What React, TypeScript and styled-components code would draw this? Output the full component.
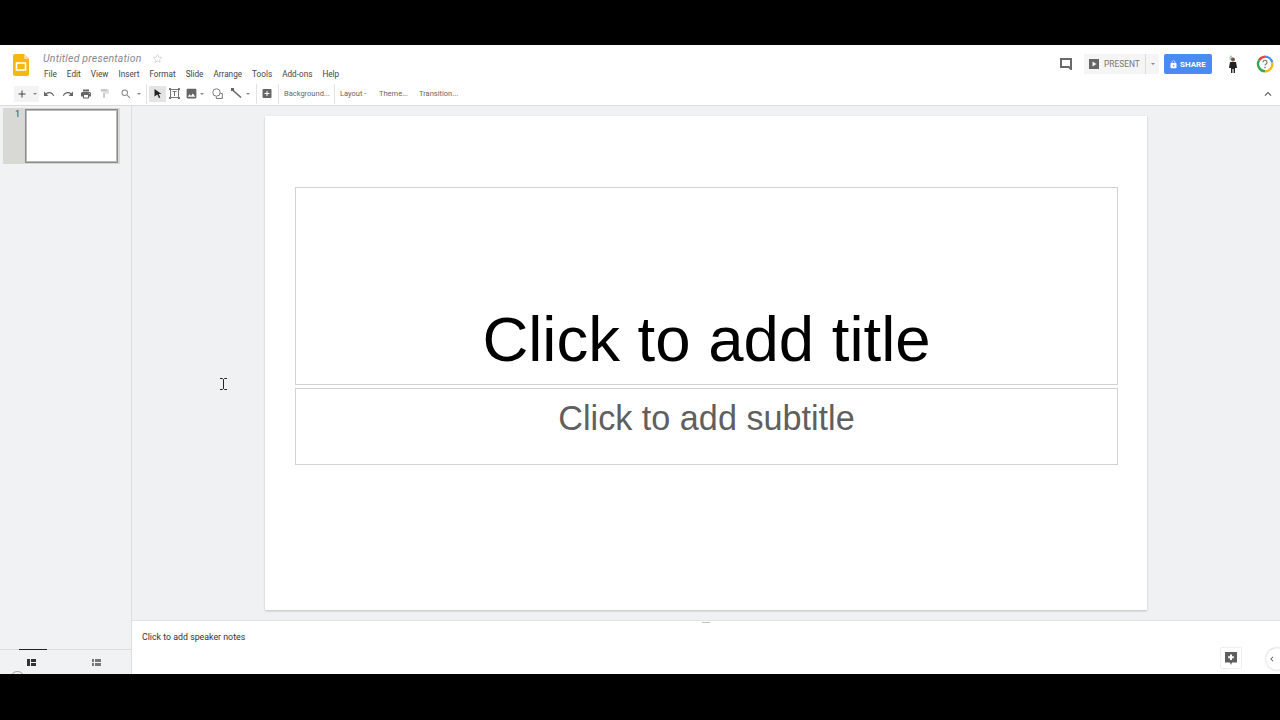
import React from 'react';
import styled, { createGlobalStyle } from 'styled-components';
import {
  MdUndo,
  MdRedo,
  MdPrint,
  MdFormatPaint,
  MdSearch,
  MdImage,
  MdAddBox,
  MdLock,
  MdKeyboardArrowUp,
  MdKeyboardArrowLeft,
  MdAdd,
} from 'react-icons/md';

const GlobalStyle = createGlobalStyle`
  html, body {
    margin: 0;
    padding: 0;
    background: #000;
    overflow: hidden;
  }
  body {
    font-family: Roboto, "Liberation Sans", sans-serif;
  }
`;

const Page = styled.div`
  position: relative;
  width: 1280px;
  height: 720px;
  background: #000;
  padding: 45px 0 46px;
  box-sizing: border-box;
`;

const Editor = styled.div`
  width: 100%;
  height: 100%;
  background: #fff;
  display: flex;
  flex-direction: column;
  overflow: hidden;
`;

const Header = styled.header`
  height: 39px;
  flex: none;
  display: flex;
  align-items: flex-start;
  padding: 9px 0 0 13px;
  box-sizing: border-box;
`;

const TitleBlock = styled.div`
  margin-left: 14px;
  display: flex;
  flex-direction: column;
`;

const TitleRow = styled.div`
  display: flex;
  align-items: center;
  height: 10px;
  margin-top: -1px;
`;

const DocTitle = styled.span`
  font-size: 10.5px;
  font-style: italic;
  color: #8a8a8a;
  letter-spacing: 0.2px;
  width: 109px;
`;

const MenuBar = styled.nav`
  display: flex;
  gap: 10px;
  margin: 6px 0 0 1px;
`;

const MenuItem = styled.span`
  font-size: 8.2px;
  line-height: 11px;
  color: #444;
`;

const HeaderRight = styled.div`
  margin-left: auto;
  display: flex;
  align-items: center;
  height: 20px;
  padding-right: 6px;
`;

const PresentGroup = styled.div`
  display: flex;
  height: 20px;
  width: 75px;
  margin-left: 12px;
  background: #f5f5f5;
`;

const PresentButton = styled.div`
  flex: 1;
  display: flex;
  align-items: center;
  gap: 5px;
  padding-left: 5px;
  font-size: 8.4px;
  color: #777;
  border-right: 1px solid #ddd;
`;

const PresentCaret = styled.div`
  width: 13px;
  display: flex;
  align-items: center;
  justify-content: center;
`;

const Caret = styled.span`
  width: 0;
  height: 0;
  border-left: 2px solid transparent;
  border-right: 2px solid transparent;
  border-top: 2px solid #888;
`;

const ShareButton = styled.div`
  width: 48px;
  height: 20px;
  margin-left: 5px;
  border-radius: 2px;
  background: #4a8af4;
  color: #fff;
  display: flex;
  align-items: center;
  padding-left: 5px;
  box-sizing: border-box;
  gap: 2px;
  font-size: 8px;
  font-weight: 700;
`;

const AvatarSlot = styled.div`
  margin-left: 14px;
  width: 14px;
  display: flex;
`;

const HelpSlot = styled.div`
  margin-left: 16px;
  display: flex;
`;

const Toolbar = styled.div`
  height: 22px;
  flex: none;
  display: flex;
  align-items: center;
  padding: 0 5px 2px 14px;
  box-sizing: border-box;
  border-bottom: 1px solid #dcdcdc;
`;

const ToolButton = styled.div<{ $w: number; $ml?: number; $bg?: string }>`
  width: ${(p) => p.$w}px;
  height: 16px;
  flex: none;
  margin-left: ${(p) => p.$ml ?? 0}px;
  background: ${(p) => p.$bg ?? 'transparent'};
  display: flex;
  align-items: center;
  justify-content: center;
  color: ${(p) => (p.$bg === '#e4e4e4' ? '#222' : '#666')};
`;

const ToolDivider = styled.span<{ $ml: number }>`
  width: 1px;
  height: 20px;
  margin-left: ${(p) => p.$ml}px;
  background: #e3e3e3;
  flex: none;
`;

const ToolText = styled.span<{ $ml: number; $w: number }>`
  margin-left: ${(p) => p.$ml}px;
  width: ${(p) => p.$w}px;
  flex: none;
  font-size: 7.5px;
  color: #666;
  white-space: nowrap;
`;

const CollapseSlot = styled.div`
  margin-left: auto;
  display: flex;
  color: #555;
`;

const Workspace = styled.div`
  flex: 1;
  min-height: 0;
  display: flex;
`;

const Filmstrip = styled.aside`
  width: 132px;
  flex: none;
  box-sizing: border-box;
  background: #f1f2f4;
  border-right: 1px solid #dedede;
  display: flex;
  flex-direction: column;
  padding-top: 2px;
`;

const SlideEntry = styled.div`
  width: 117px;
  height: 56px;
  margin-left: 3px;
  background: #d8d8d4;
  display: flex;
  box-sizing: border-box;
  padding: 1px 2px 1px 0;
`;

const SlideNumber = styled.span`
  width: 22px;
  padding-right: 5px;
  box-sizing: border-box;
  text-align: right;
  font-size: 9px;
  line-height: 10px;
  color: #444;
`;

const Thumb = styled.div`
  flex: 1;
  background: #fff;
  border: 1px solid #8a8a8a;
  box-shadow: inset 0 0 0 1px #bbb;
`;

const ViewTabs = styled.div`
  margin-top: auto;
  height: 24px;
  flex: none;
  display: flex;
  border-top: 1px solid #dcdcdc;
  position: relative;
  &::after {
    content: '';
    position: absolute;
    left: 10px;
    top: 21px;
    width: 13px;
    height: 13px;
    border: 1px solid #8fa3b5;
    border-radius: 50%;
  }
`;

const ViewTab = styled.div<{ $active?: boolean }>`
  width: 66px;
  padding-right: 3px;
  box-sizing: border-box;
  display: flex;
  align-items: center;
  justify-content: center;
  color: ${(p) => (p.$active ? '#333' : '#777')};
  position: relative;
  &::before {
    content: '';
    display: ${(p) => (p.$active ? 'block' : 'none')};
    position: absolute;
    top: -1px;
    left: 19px;
    width: 28px;
    height: 1px;
    background: #222;
  }
`;

const MainColumn = styled.main`
  flex: 1;
  min-width: 0;
  display: flex;
  flex-direction: column;
`;

const Canvas = styled.div`
  flex: 1;
  min-height: 0;
  background: #f0f1f3;
  padding: 10px 0 0 133px;
  box-sizing: border-box;
`;

const Slide = styled.section`
  width: 882px;
  height: 494px;
  background: #fff;
  box-shadow: 0 1px 2px rgba(0, 0, 0, 0.22);
  padding: 71px 29px 0 30px;
  box-sizing: border-box;
  display: flex;
  flex-direction: column;
  gap: 3px;
  font-family: "Liberation Sans", Arial, sans-serif;
`;

const Placeholder = styled.div<{ $h: number }>`
  height: ${(p) => p.$h}px;
  flex: none;
  border: 1px solid #d2d2d2;
  box-sizing: border-box;
  display: flex;
  justify-content: center;
`;

const TitleText = styled.div`
  align-self: flex-end;
  font-size: 63.5px;
  line-height: 74px;
  color: #000;
  padding-bottom: 8px;
`;

const SubtitleText = styled.div`
  font-size: 34.2px;
  line-height: 40px;
  color: #5f5f5f;
  padding-top: 9px;
`;

const Notes = styled.div`
  height: 54px;
  flex: none;
  background: #fff;
  border-top: 1px solid #e2e2e2;
  box-sizing: border-box;
  position: relative;
  padding: 10px 0 0 10px;
  font-size: 8.8px;
  line-height: 12px;
  color: #333;
`;

const NotesHandle = styled.span`
  position: absolute;
  top: 1px;
  left: 570px;
  width: 8px;
  height: 1px;
  background: #bbb;
`;

const AddNoteButton = styled.div`
  position: absolute;
  top: 26px;
  right: 38px;
  width: 22px;
  height: 22px;
  border: 1px solid #eee;
  border-radius: 2px;
  box-sizing: border-box;
  display: flex;
  align-items: center;
  justify-content: center;
`;

const SidePanelToggle = styled.div`
  position: absolute;
  top: 27px;
  right: -8px;
  width: 22px;
  height: 22px;
  border-radius: 50%;
  background: #fff;
  box-shadow: 0 0 2px rgba(0, 0, 0, 0.3);
  display: flex;
  align-items: center;
  padding-left: 1px;
  box-sizing: border-box;
  color: #555;
`;

const TextCursor = styled.svg`
  position: absolute;
  left: 220px;
  top: 378px;
`;

const SlidesLogo = () => (
  <svg width="16" height="22" viewBox="0 0 16 22">
    <path d="M2 0h9l5 5v15a2 2 0 0 1-2 2H2a2 2 0 0 1-2-2V2a2 2 0 0 1 2-2z" fill="#f6b80f" />
    <path d="M11 0l5 5h-5z" fill="#fadb80" />
    <rect x="3.5" y="9" width="9" height="7" fill="none" stroke="#fff" strokeWidth="1.6" />
  </svg>
);

const StarIcon = () => (
  <svg width="11" height="11" viewBox="0 0 24 24">
    <path d="M12 3l2.8 6 6.5.7-4.800 4.400 1.300 6.400L12 17.300l-5.800 3.200 1.300-6.400L2.700 9.700 9.200 9z" fill="none" stroke="#d8d8d8" strokeWidth="2" />
  </svg>
);

const CommentIcon = () => (
  <svg width="12" height="12" viewBox="0 0 12 12">
    <path d="M1 1h10v10L8.800 9H1z" fill="none" stroke="#6a6a6a" strokeWidth="2" />
  </svg>
);

const PresentIcon = () => (
  <svg width="10" height="10" viewBox="0 0 10 10">
    <rect width="10" height="10" fill="#666" />
    <path d="M3.500 2.500L7.500 5l-4 2.500z" fill="#f5f5f5" />
  </svg>
);

const Avatar = () => (
  <svg width="14" height="18" viewBox="0 0 14 18">
    <path d="M5 0l2 3-2 3-2-3z" fill="#a9d3b4" />
    <circle cx="7" cy="4.500" r="2" fill="#6d5a4c" />
    <path d="M4 7h6l1 6H9v5H7.600v-4H6.400v4H5v-5H3z" fill="#222" />
  </svg>
);

const HelpIcon = () => (
  <svg width="18" height="18" viewBox="0 0 18 18">
    <g fill="none" strokeWidth="2.400">
      <path d="M3 5.400A7.400 7.400 0 0 1 9 1.600" stroke="#ea4335" />
      <path d="M9 1.600a7.400 7.400 0 0 1 7.200 6" stroke="#4a8af4" />
      <path d="M16.200 7.600A7.400 7.400 0 0 1 9 16.400" stroke="#f6b80f" />
      <path d="M9 16.400A7.400 7.400 0 0 1 3 5.400" stroke="#34a853" />
    </g>
    <path d="M7 7.200a2 2 0 1 1 3 1.800c-.7.400-1 .8-1 1.600" fill="none" stroke="#777" strokeWidth="1.200" />
    <circle cx="9" cy="12.600" r=".8" fill="#777" />
  </svg>
);

const ArrowIcon = () => (
  <svg width="11" height="11" viewBox="0 0 11 11">
    <path d="M2.500 1l7 5H6.700l1.600 3.400-1.400.6-1.500-3.400-2.900 2z" fill="#222" />
  </svg>
);

const TextBoxIcon = () => (
  <svg width="11" height="11" viewBox="0 0 11 11">
    <rect x="1.500" y="1.500" width="8" height="8" fill="none" stroke="#777" />
    <path d="M3.500 3.500h4M5.500 3.500v4.500" fill="none" stroke="#777" />
    <path d="M0 0h2v2H0zM9 0h2v2H9zM0 9h2v2H0zM9 9h2v2H9z" fill="#777" />
  </svg>
);

const ShapeIcon = () => (
  <svg width="11" height="11" viewBox="0 0 11 11">
    <circle cx="4.500" cy="4.500" r="3.700" fill="none" stroke="#777" />
    <path d="M8.300 5.500h2v5h-6V8.600" fill="none" stroke="#777" />
  </svg>
);

const LineIcon = () => (
  <svg width="11" height="11" viewBox="0 0 11 11">
    <path d="M1 1.500l9 8" stroke="#666" strokeWidth="1.600" />
    <rect x="0" y="0" width="3" height="3" fill="#666" />
  </svg>
);

const GridViewIcon = () => (
  <svg width="9" height="7" viewBox="0 0 9 7">
    <path d="M0 0h3v7H0zM4 0h5v3H4zM4 4h5v3H4z" fill="currentColor" />
  </svg>
);

const ListViewIcon = () => (
  <svg width="9" height="7" viewBox="0 0 9 7">
    <path d="M0 0h2v3H0zM3 0h6v3H3zM0 4h2v3H0zM3 4h6v3H3z" fill="currentColor" />
  </svg>
);

const AddNoteIcon = () => (
  <svg width="12" height="13" viewBox="0 0 12 13">
    <path d="M0 0h12v10.500H7L6 13l-1-2.500H0z" fill="#5f5f5f" />
    <path d="M5 2.500h2V4.300h1.800v2H7v1.800H5V6.300H3.200v-2H5z" fill="#fff" />
  </svg>
);

const menus = ['File', 'Edit', 'View', 'Insert', 'Format', 'Slide', 'Arrange', 'Tools', 'Add-ons', 'Help'];

export default function App() {
  return (
    <Page>
      <GlobalStyle />
      <Editor>
        <Header>
          <SlidesLogo />
          <TitleBlock>
            <TitleRow>
              <DocTitle>Untitled presentation</DocTitle>
              <StarIcon />
            </TitleRow>
            <MenuBar>
              {menus.map((m) => (
                <MenuItem key={m}>{m}</MenuItem>
              ))}
            </MenuBar>
          </TitleBlock>
          <HeaderRight>
            <CommentIcon />
            <PresentGroup>
              <PresentButton>
                <PresentIcon />
                PRESENT
              </PresentButton>
              <PresentCaret>
                <Caret />
              </PresentCaret>
            </PresentGroup>
            <ShareButton>
              <MdLock size={9} />
              SHARE
            </ShareButton>
            <AvatarSlot>
              <Avatar />
            </AvatarSlot>
            <HelpSlot>
              <HelpIcon />
            </HelpSlot>
          </HeaderRight>
        </Header>

        <Toolbar>
          <ToolButton $w={16} $bg="#f3f3f3">
            <MdAdd size={12} color="#444" />
          </ToolButton>
          <ToolButton $w={9} $bg="#f3f3f3">
            <Caret />
          </ToolButton>
          <ToolButton $w={16} $ml={2}>
            <MdUndo size={12} />
          </ToolButton>
          <ToolButton $w={16} $ml={3}>
            <MdRedo size={12} />
          </ToolButton>
          <ToolButton $w={16} $ml={2}>
            <MdPrint size={12} />
          </ToolButton>
          <ToolButton $w={16} $ml={2}>
            <MdFormatPaint size={11} color="#c9c9c9" />
          </ToolButton>
          <ToolButton $w={20} $ml={4}>
            <MdSearch size={12} color="#888" />
          </ToolButton>
          <ToolButton $w={6}>
            <Caret />
          </ToolButton>
          <ToolDivider $ml={4} />
          <ToolButton $w={17} $ml={2} $bg="#e4e4e4">
            <ArrowIcon />
          </ToolButton>
          <ToolButton $w={17}>
            <TextBoxIcon />
          </ToolButton>
          <ToolButton $w={15} $ml={1}>
            <MdImage size={13} />
          </ToolButton>
          <ToolButton $w={5}>
            <Caret />
          </ToolButton>
          <ToolButton $w={14} $ml={6}>
            <ShapeIcon />
          </ToolButton>
          <ToolButton $w={16} $ml={4}>
            <LineIcon />
          </ToolButton>
          <ToolButton $w={6} $ml={1}>
            <Caret />
          </ToolButton>
          <ToolDivider $ml={5} />
          <ToolButton $w={12} $ml={4}>
            <MdAddBox size={13} />
          </ToolButton>
          <ToolDivider $ml={5} />
          <ToolText $ml={5} $w={44}>Background...</ToolText>
          <ToolDivider $ml={6} />
          <ToolText $ml={5} $w={28}>Layout -</ToolText>
          <ToolText $ml={11} $w={28}>Theme...</ToolText>
          <ToolText $ml={12} $w={36}>Transition...</ToolText>
          <CollapseSlot>
            <MdKeyboardArrowUp size={14} />
          </CollapseSlot>
        </Toolbar>

        <Workspace>
          <Filmstrip>
            <SlideEntry>
              <SlideNumber>1</SlideNumber>
              <Thumb />
            </SlideEntry>
            <ViewTabs>
              <ViewTab $active>
                <GridViewIcon />
              </ViewTab>
              <ViewTab>
                <ListViewIcon />
              </ViewTab>
            </ViewTabs>
          </Filmstrip>
          <MainColumn>
            <Canvas>
              <Slide>
                <Placeholder $h={198}>
                  <TitleText>Click to add title</TitleText>
                </Placeholder>
                <Placeholder $h={77}>
                  <SubtitleText>Click to add subtitle</SubtitleText>
                </Placeholder>
              </Slide>
            </Canvas>
            <Notes>
              <NotesHandle />
              Click to add speaker notes
              <AddNoteButton>
                <AddNoteIcon />
              </AddNoteButton>
              <SidePanelToggle>
                <MdKeyboardArrowLeft size={10} />
              </SidePanelToggle>
            </Notes>
          </MainColumn>
        </Workspace>
      </Editor>
      <TextCursor width="7" height="12" viewBox="0 0 7 12">
        <path d="M0 .5h2.500l1 1 1-1H7M3.500 1.500v9M0 11.500h2.500l1-1 1 1H7" fill="none" stroke="#222" />
      </TextCursor>
    </Page>
  );
}
